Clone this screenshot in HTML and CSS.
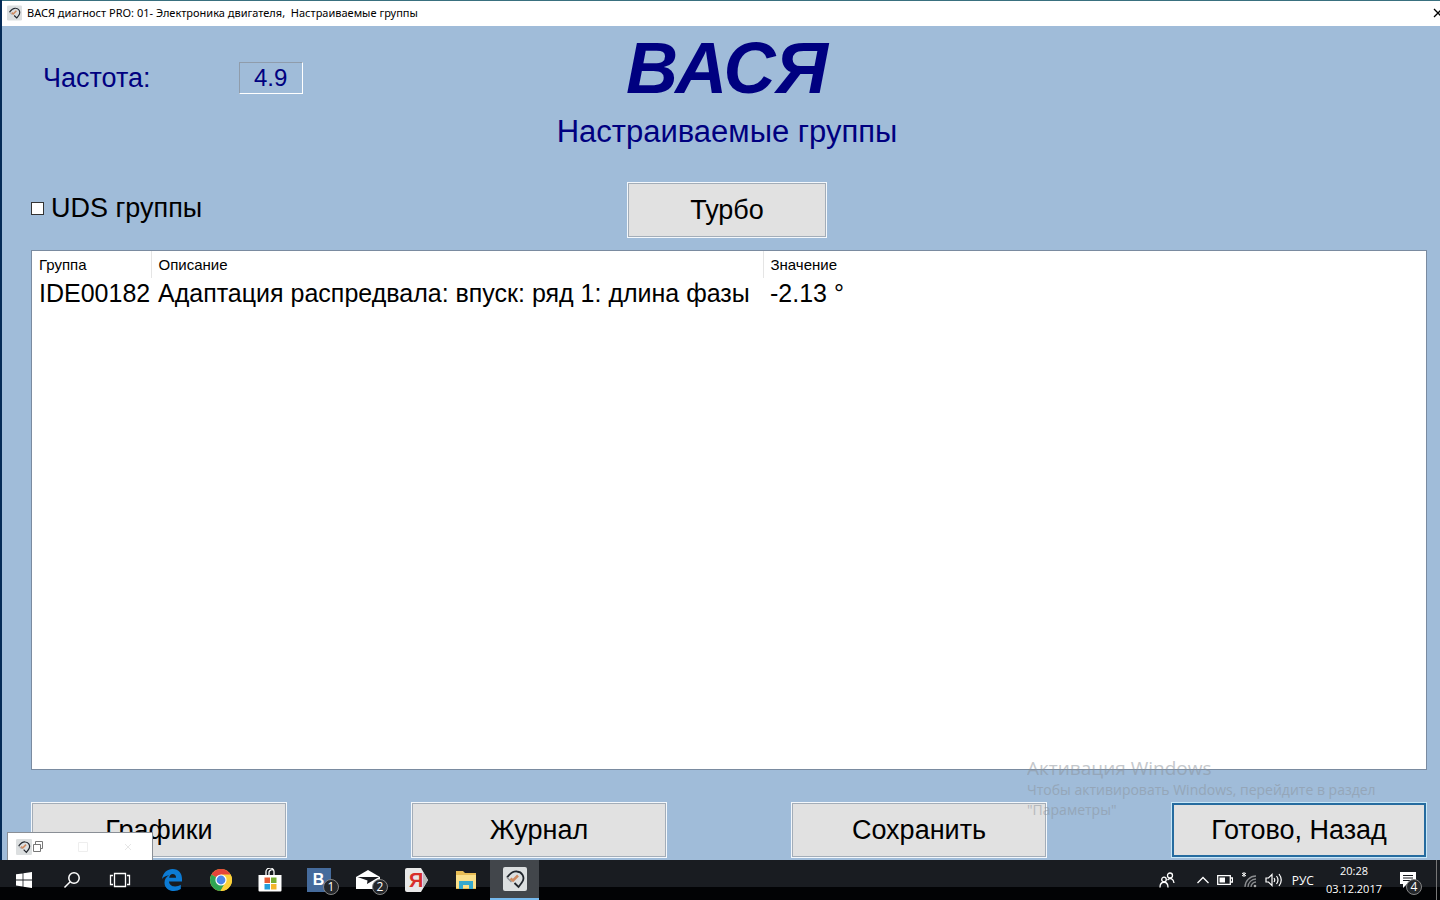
FILE: index.html
```html
<!DOCTYPE html>
<html lang="ru">
<head>
<meta charset="utf-8">
<title>ВАСЯ диагност PRO</title>
<link rel="stylesheet" href="styles.css">
</head>
<body>
<svg class="defs" aria-hidden="true">
  <symbol id="logo" viewBox="0 0 24 24">
    <rect width="24" height="24" rx="2" fill="#dcdfe0"/>
    <path d="M4 10.500C7 6.500 10 4 14 4.500c5 .5 7.500 5 6 9-.8 2-2.500 4-4.500 6.500l-4-4" fill="none" stroke="#20252c" stroke-width="1.800"/>
    <path d="M4 10.500l4.500 4.500" fill="none" stroke="#8c9094" stroke-width="1.300"/>
    <path d="M7.500 11.500l2.500 2 5-5" fill="none" stroke="#cf8a60" stroke-width="2.500"/>
  </symbol>
</svg>
<div class="window">
  <header class="titlebar">
    <svg class="title-icon"><use href="#logo"/></svg>
    <span class="title-text">ВАСЯ диагност PRO: 01- Электроника двигателя,&nbsp; Настраиваемые группы</span>
    <button class="close" aria-label="Закрыть"><svg width="10" height="10" viewBox="0 0 10 10"><path d="M1 1l8 8M9 1L1 9" stroke="#000" stroke-width="1.300"/></svg></button>
  </header>
  <main class="content">
    <section class="top">
      <div class="rate"><label for="rate">Частота:</label><output id="rate" class="rate-value">4.9</output></div>
      <div class="heading">
        <h1 class="brand">ВАСЯ</h1>
        <h2 class="subtitle">Настраиваемые группы</h2>
      </div>
    </section>
    <section class="mode">
      <label class="uds"><input type="checkbox" class="check">UDS группы</label>
      <button class="btn turbo">Турбо</button>
    </section>
    <div class="list">
      <table class="table">
        <thead><tr><th class="c-group">Группа</th><th class="c-desc">Описание</th><th class="c-value">Значение</th></tr></thead>
        <tbody><tr><td>IDE00182</td><td>Адаптация распредвала: впуск: ряд 1: длина фазы</td><td>-2.13 °</td></tr></tbody>
      </table>
    </div>
    <footer class="actions">
      <button class="btn">Графики</button>
      <button class="btn">Журнал</button>
      <button class="btn">Сохранить</button>
      <button class="btn primary">Готово, Назад</button>
    </footer>
  </main>
  <div class="watermark"><p class="wm-title">Активация Windows</p><p class="wm-text">Чтобы активировать Windows, перейдите в раздел<br>"Параметры"</p></div>
  <div class="minimized">
    <svg width="16" height="16"><use href="#logo"/></svg>
    <svg width="120" height="16" viewBox="0 0 120 16" fill="none"><path d="M1.500 5.500h7v7h-7zM3.500 5V2.500h7v7H9" stroke="#777"/><path d="M46.500 3.500h9v9h-9z" stroke="#eee"/><path d="M93 5l6 6M99 5l-6 6" stroke="#e6e6e6"/></svg>
  </div>
</div>
<nav class="taskbar">
  <div class="system">
    <button class="task" aria-label="Пуск"><svg width="16" height="16" viewBox="0 0 16 16" fill="#fff"><path d="M0 2.300L6.600 1.400v6.100H0zM7.400 1.300L16 0v7.500H7.400zM0 8.400h6.600v6.100L0 13.600zM7.400 8.400H16V16l-8.600-1.300z"/></svg></button>
    <button class="task" aria-label="Поиск"><svg width="18" height="18" viewBox="0 0 18 18" fill="none" stroke="#fff" stroke-width="1.500"><circle cx="11" cy="7" r="5.200"/><path d="M7.200 10.800L1.500 16.500"/></svg></button>
    <button class="task" aria-label="Представление задач"><svg width="22" height="16" viewBox="0 0 22 16" fill="none" stroke="#fff" stroke-width="1.300"><path d="M5.500 1.500h11v13h-11zM4 3.500H1.500v9H4M18 3.500h2.500v9H18"/></svg></button>
  </div>
  <button class="task" aria-label="Edge"><svg width="22" height="22" viewBox="0 0 22 22"><path fill="#0c7bd4" d="M1 10C2 3.500 6.500 0 11.500 0 18 0 21 4.500 21 10v2.500H8c.3 3.500 3 4.900 6 4.900 2.200 0 4-.6 5.800-1.600v4.300C17.800 21.300 15.600 22 13 22 7.500 22 3.500 18.700 3.500 13.700c0-3.400 1.700-6 4.700-7.400C5 6.700 2.600 8 1 10zm7.200-1.200h6.900c0-2.600-1.300-3.900-3.400-3.900-1.900 0-3.200 1.500-3.500 3.900z"/></svg></button>
  <button class="task" aria-label="Chrome"><svg width="22" height="22" viewBox="0 0 22 22"><circle cx="11" cy="11" r="11" fill="#fbd13a"/><path d="M11 11L1.500 5.500A11 11 0 0 1 20.500 5.500z" fill="#e5443a"/><path d="M1.500 5.500A11 11 0 0 0 10.500 22L15 14l-4-3z" fill="#2fa553"/><path d="M11 5.500h9.500A11 11 0 0 1 10.500 22L16 13z" fill="#fbd13a"/><circle cx="11" cy="11" r="5.600" fill="#fff"/><circle cx="11" cy="11" r="4.400" fill="#4a86e8"/></svg></button>
  <button class="task" aria-label="Магазин"><svg width="24" height="24" viewBox="0 0 24 24"><path d="M8 7V4.500a3.500 3.500 0 0 1 8-1V7M11 7V4a3 3 0 0 1 5-1.500" fill="none" stroke="#fff" stroke-width="1.300"/><path d="M0.500 7h23v15.500a1 1 0 0 1-1 1h-21a1 1 0 0 1-1-1z" fill="#fff"/><path fill="#e75b33" d="M6.500 9.500H12V15H6.500z"/><path fill="#76ae32" d="M13 9.500h5.500V15H13z"/><path fill="#249fdb" d="M6.500 16H12v5.500H6.500z"/><path fill="#f4b62c" d="M13 16h5.500v5.500H13z"/></svg></button>
  <button class="task" aria-label="ВКонтакте"><span class="vk">B</span><span class="badge">1</span></button>
  <button class="task" aria-label="Почта"><svg width="26" height="22" viewBox="0 0 26 22"><path d="M1 8L13 1l12 7v12H1z" fill="#fff"/><path d="M2.500 8H24l-12 7 .5-3.500z" fill="#17191e"/></svg><span class="badge">2</span></button>
  <button class="task" aria-label="Яндекс"><span class="yandex"><svg width="23" height="24" viewBox="0 0 23 24"><path d="M2 0h14l7 12-7 12H2a2 2 0 0 1-2-2V2a2 2 0 0 1 2-2z" fill="#e8e8e8"/><path d="M18 4l5 8-5 8z" fill="#bbb"/></svg><b>Я</b></span></button>
  <button class="task" aria-label="Проводник"><svg width="22" height="20" viewBox="0 0 22 20"><path d="M1 1h7l2 2h11v16H1z" fill="#e8bd55"/><path d="M1 5h20v13H1z" fill="#fae08b"/><path d="M4 19v-8h14v8h-4v-4H8v4z" fill="#35a9cf"/></svg></button>
  <button class="task active" aria-label="ВАСЯ диагност"><svg width="24" height="24"><use href="#logo"/></svg></button>
  <div class="tray">
    <svg width="16" height="16" viewBox="0 0 16 16" fill="none" stroke="#fff" stroke-width="1.300"><circle cx="5" cy="7.500" r="2.300"/><path d="M1 15.500c0-7 8-7 8 0"/><circle cx="11" cy="3.500" r="2.500"/><path d="M8.500 8c3-3 6-1 6.500 3"/></svg>
    <svg class="chevron" width="12" height="8" viewBox="0 0 12 8" fill="none" stroke="#fff" stroke-width="1.300"><path d="M.5 7L6 1.500 11.500 7"/></svg>
    <svg width="16" height="10" viewBox="0 0 16 10"><path d="M.7.700h12.600v8.600H.7zM14 3h1.500v4H14" fill="none" stroke="#fff" stroke-width="1.300"/><path d="M2.500 2.500H8v5H2.500z" fill="#fff"/></svg>
    <svg width="16" height="16" viewBox="0 0 16 16" fill="none"><path d="M4 15A11 11 0 0 1 15 4M7 15a8 8 0 0 1 8-8M10 15a5 5 0 0 1 5-5" stroke="#8b8d90" stroke-width="1.300"/><circle cx="14" cy="14" r="1.300" fill="#aaa"/><path d="M3 0v5M1 1l4 3M5 1L1 4" stroke="#fff"/></svg>
    <svg width="17" height="14" viewBox="0 0 17 14" fill="none" stroke="#fff" stroke-width="1.200"><path d="M1 5h2.500L7 1.500v11L3.500 9H1zM9 5q1.500 2 0 4M11.500 3q3 4 0 8M14 1q4.500 6 0 12"/></svg>
    <span class="lang">РУС</span>
    <time class="clock" datetime="2017-12-03T20:28"><span>20:28</span><span>03.12.2017</span></time>
    <span class="notice"><svg width="16" height="16" viewBox="0 0 16 16"><path d="M0 0h16v12H7l-4 4v-4H0z" fill="#fff"/><path d="M3 3.500h10M3 6h10M3 8.500h7" stroke="#17191e"/></svg><span class="badge">4</span></span>
  </div>
</nav>
</body>
</html>
```

FILE: styles.css
```css
* { box-sizing: border-box; }
body {
  margin: 0;
  height: 100vh;
  display: flex;
  flex-direction: column;
  overflow: hidden;
  font-family: "Liberation Sans", Arial, sans-serif;
  color: #000;
}
button { font: inherit; color: inherit; border: 0; padding: 0; background: none; }
h1, h2, p { margin: 0; }
svg { flex: none; }
.defs { position: absolute; width: 0; height: 0; }

.window {
  position: relative;
  flex: 1;
  min-height: 0;
  display: flex;
  flex-direction: column;
  background: #a0bcd9;
  border-left: 2px solid #042a56;
}
.titlebar {
  display: flex;
  align-items: center;
  gap: 5px;
  height: 26px;
  padding: 0 0 2px 5px;
  background: #fff;
  border-top: 1px solid #39707f;
}
.title-icon { width: 15px; height: 16px; }
.title-text { flex: 1; font: 11px "Noto Sans", sans-serif; white-space: nowrap; }
.close { display: flex; width: 7px; overflow: hidden; }

.content {
  flex: 1;
  min-height: 0;
  display: flex;
  flex-direction: column;
  padding: 4px 13px 2px 29px;
}
.top { display: grid; grid-template-columns: 1fr auto 1fr; height: 152px; padding-right: 4px; }
.rate {
  display: flex;
  align-items: center;
  align-self: start;
  gap: 88px;
  margin-top: 32px;
  padding-left: 12px;
  font-size: 27px;
  color: #000080;
}
.rate-value {
  width: 64px;
  height: 32px;
  border: 1px solid;
  border-color: #8f9cab #fff #fff #8f9cab;
  font-size: 24px;
  line-height: 30px;
  text-align: center;
}
.heading { text-align: center; color: #000080; }
.brand { font-size: 72px; font-style: italic; line-height: 76px; }
.subtitle { font-size: 31px; font-weight: 400; line-height: 52px; white-space: nowrap; }

.mode { display: grid; grid-template-columns: 1fr auto 1fr; height: 68px; padding-right: 4px; }
.uds { display: flex; align-items: center; gap: 7px; height: 52px; font-size: 27px; }
.check {
  appearance: none;
  width: 13px;
  height: 13px;
  margin: 0;
  background: #fff;
  border: 1px solid #333;
}
.btn {
  width: 256px;
  height: 56px;
  background: #e1e1e1;
  border: 1px solid #f4f8fc;
  box-shadow: inset 0 0 0 1px #a3adb8;
  font-size: 27px;
}
.turbo { width: 200px; }
.primary { border-color: #c8e8f8; box-shadow: inset 0 0 0 2px #256b9f; }

.list { flex: 1; min-height: 0; background: #fff; border: 1px solid #7a8ba0; }
.table { width: 100%; border-collapse: collapse; table-layout: fixed; text-align: left; white-space: nowrap; }
.table th { height: 27px; padding: 0 0 0 7px; font-size: 15px; font-weight: 400; border-right: 1px solid #e5e5e5; }
.table td { height: 30px; padding: 0 0 0 7px; font-size: 25px; line-height: 30px; }
.table .c-group { width: 119px; }
.table .c-desc { width: 612px; }
.table .c-value { border-right: 0; }
.actions { display: flex; justify-content: space-between; margin-top: 32px; }

.watermark { position: absolute; right: 40px; bottom: 40px; width: 373px; color: #8b929a; opacity: .5; font-family: "Open Sans", sans-serif; }
.wm-title { font-size: 19px; line-height: 24px; }
.wm-text { font-size: 14px; line-height: 20px; }
.minimized {
  position: absolute;
  left: 5px;
  bottom: 0;
  width: 146px;
  height: 28px;
  display: flex;
  align-items: center;
  padding-left: 8px;
  background: #fff;
  border: 1px solid #8a8f96;
  border-bottom: 0;
}

.taskbar {
  display: flex;
  height: 40px;
  background: linear-gradient(#191c21 0 27px, #020305 27px);
  color: #fff;
}
.system { display: flex; margin-right: 3px; }
.system .task { width: 48px; }
.task { position: relative; display: flex; align-items: center; justify-content: center; width: 49px; height: 40px; }
.active { background: #42464b; border-bottom: 2px solid #76b9ed; }
.vk { width: 24px; height: 24px; background: #456b9c; font-size: 16px; font-weight: 700; line-height: 24px; }
.badge {
  position: absolute;
  right: 4px;
  bottom: 5px;
  width: 16px;
  height: 16px;
  border: 1px solid #858585;
  border-radius: 50%;
  background: #24272b;
  font: 12px/14px "Open Sans", sans-serif;
  text-align: center;
}
.yandex { position: relative; display: flex; }
.yandex b { position: absolute; left: 4px; top: 0; color: #d8302a; font: 700 20px/24px "Liberation Sans Narrow", "Liberation Sans", sans-serif; }
.tray { flex: 1; display: flex; align-items: center; justify-content: flex-end; gap: 8px; padding-right: 3px; font: 12px "Open Sans", sans-serif; }
.chevron { margin-left: 14px; }
.lang { margin: 0 4px 0 2px; }
.clock { display: flex; flex-direction: column; font-size: 11px; line-height: 18px; text-align: center; }
.notice { position: relative; display: flex; align-items: center; height: 40px; width: 47px; padding-left: 10px; border-right: 1px solid #777; }
.notice .badge { right: 14px; }
```
